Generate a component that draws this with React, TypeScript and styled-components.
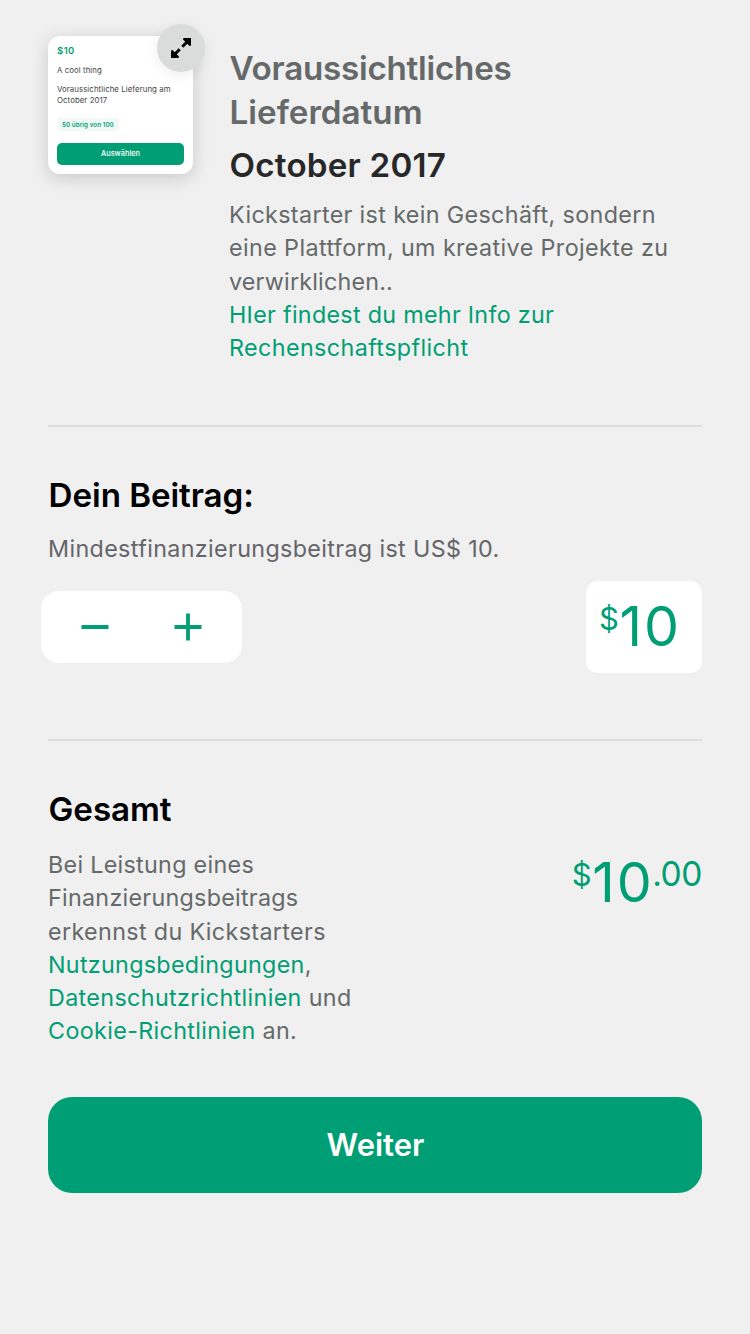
import React from "react";
import styled, { createGlobalStyle } from "styled-components";

const green = "#009e74";

const Global = createGlobalStyle`
  * { box-sizing: border-box; }
  body { margin: 0; background: #f0f0f0; font-family: Inter, "Liberation Sans", sans-serif; }
  h2, p { margin: 0; }
`;
const Page = styled.main`
  width: 750px; height: 1334px; padding: 36px 48px 0; background: #f0f0f0;
  display: flex; flex-direction: column;
`;
const Summary = styled.section`
  display: flex; height: 391px; border-bottom: 2px solid #dcdedd;
`;
const Card = styled.div`
  position: relative; width: 145px; height: 138px; flex: none; margin-right: 36px;
  background: #fff; border-radius: 12px; padding: 9px;
  box-shadow: 0 4px 18px rgba(0,0,0,.17);
  display: flex; flex-direction: column; align-items: flex-start;
`;
const CardPrice = styled.div`
  color: ${green}; font-size: 9.5px; letter-spacing: .45px; font-weight: 600; line-height: 12px; height: 20px;
`;
const CardText = styled.div<{ $h: number }>`
  color: #444; font-size: 7.8px; letter-spacing: .08px; line-height: 11px; height: ${p => p.$h}px; white-space: nowrap;
`;
const Left = styled.div`
  background: #f1f9f7; color: ${green}; font-size: 6.2px; letter-spacing: .1px; font-weight: 600; line-height: 13px; padding: 0 5px; border-radius: 2px; white-space: nowrap;
`;
const Choose = styled.div`
  margin-top: auto; width: 127px; height: 22px; border-radius: 5px; background: ${green};
  color: #fff; font-size: 7.4px; font-weight: 500; text-align: center; line-height: 22px;
`;
const Expand = styled.button`
  position: absolute; right: -12px; top: -12px; width: 48px; height: 48px; padding: 0; border: 0;
  border-radius: 50%; background: #dadcdb; display: grid; place-items: center;
  box-shadow: 0 3px 14px rgba(0,0,0,.07);
`;
const Info = styled.div` padding-top: 10px; white-space: nowrap; `;
const Heading = styled.h2<{ $color?: string; $gap?: number; $ls?: number }>`
  font-size: 33.2px; line-height: 44px; font-weight: 600; letter-spacing: ${p => p.$ls ?? -0.08}px;
  color: ${p => p.$color || "#000"}; margin-top: ${p => p.$gap || 0}px; padding-left: .6px; white-space: nowrap;
`;
const Line = styled.span<{ $ls?: number }>`
  display: block; ${p => p.$ls !== undefined && `letter-spacing: ${p.$ls}px;`}
`;
const Copy = styled.p<{ $gap: number; $color?: string }>`
  font-size: 23.3px; letter-spacing: .36px; line-height: 33.3px; color: ${p => p.$color || "#656969"};
  margin-top: ${p => p.$gap}px; white-space: nowrap;
`;
const Link = styled.span` color: ${green}; `;
const Pledge = styled.section`
  height: 314px; padding-top: 46px; border-bottom: 2px solid #dcdedd;
`;
const Controls = styled.div`
  display: flex; justify-content: space-between; align-items: center; margin: 16px 0 0 -7px;
`;
const Stepper = styled.div`
  width: 201px; height: 72px; border-radius: 18px; background: #fff; display: flex; align-items: center;
`;
const Amount = styled.div<{ $boxed?: boolean }>`
  display: flex; align-items: flex-start; color: ${green};
  ${p => p.$boxed && "width: 116px; height: 92px; background: #fff; border-radius: 12px; padding: 11px 0 0 13px;"}
`;
const Big = styled.span` font-size: 55.5px; line-height: 68px; letter-spacing: 2px; width: 60px; `;
const Currency = styled.span` font-size: 31px; line-height: 54px; width: 20.500px; `;
const Cents = styled.span` font-size: 33.5px; line-height: 53px; letter-spacing: -.4px; `;
const Total = styled.section` padding-top: 46px; `;
const TotalRow = styled.div` display: flex; justify-content: space-between; margin-top: 17px; `;
const Continue = styled.button`
  margin-top: 49px; height: 96px; border: 0; border-radius: 24px; background: ${green}; color: #fff;
  font: 600 31px Inter, sans-serif; padding: 0 0 0 1px; flex: none;
`;

export default function App() {
  return (
    <>
      <Global />
      <Page>
        <Summary>
          <Card>
            <CardPrice>$10</CardPrice>
            <CardText $h={19}>A cool thing</CardText>
            <CardText $h={34}>Voraussichtliche Lieferung am<br />October 2017</CardText>
            <Left>50 übrig von 100</Left>
            <Choose>Auswählen</Choose>
            <Expand aria-label="Vergrößern">
              <svg width="20" height="20" viewBox="0 0 20 20">
                <path d="M12.500 0H20V7.500L18.500 8L12 1.500ZM0 12.500V20H7.500L8 18.500L1.500 12Z" fill="#000" />
                <path d="M17 3L11.3 8.700M3 17L8.700 11.3" stroke="#000" strokeWidth="3" />
              </svg>
            </Expand>
          </Card>
          <Info>
            <Heading $color="#656969"><Line $ls={-0.25}>Voraussichtliches</Line><Line $ls={0}>Lieferdatum</Line></Heading>
            <Heading $color="#282828" $gap={9} $ls={0.2}>October 2017</Heading>
            <Copy $gap={11}>
              <Line>Kickstarter ist kein Geschäft, sondern</Line>
              <Line $ls={0.4}>eine Plattform, um kreative Projekte zu</Line>
              <Line $ls={0.2}>verwirklichen..</Line>
              <Link><Line $ls={0.3}>HIer findest du mehr Info zur</Line><Line $ls={0.4}>Rechenschaftspflicht</Line></Link>
            </Copy>
          </Info>
        </Summary>
        <Pledge>
          <Heading>Dein Beitrag:</Heading>
          <Copy $gap={15} $color="#656569">Mindestfinanzierungsbeitrag ist US$ 10.</Copy>
          <Controls>
            <Stepper>
              <svg width="201" height="72" viewBox="0 0 201 72" stroke={green} strokeWidth="3.8">
                <path d="M40.5 36H67.5M133.500 36H160.500M147 22.500V49.500" />
              </svg>
            </Stepper>
            <Amount $boxed><Currency>$</Currency><Big>10</Big></Amount>
          </Controls>
        </Pledge>
        <Total>
          <Heading>Gesamt</Heading>
          <TotalRow>
            <Copy $gap={0}>
              <Line $ls={0.3}>Bei Leistung eines</Line>
              <Line $ls={0.28}>Finanzierungsbeitrags</Line>
              <Line>erkennst du Kickstarters</Line>
              <Line $ls={0.3}><Link>Nutzungsbedingungen</Link>,</Line>
              <Line>
                <Link>Datenschutzrichtlinien</Link> und</Line>
              <Line><Link>Cookie-Richtlinien</Link> an.</Line>
            </Copy>
            <Amount><Currency>$</Currency><Big>10</Big><Cents>.00</Cents></Amount>
          </TotalRow>
        </Total>
        <Continue>Weiter</Continue>
      </Page>
    </>
  );
}
